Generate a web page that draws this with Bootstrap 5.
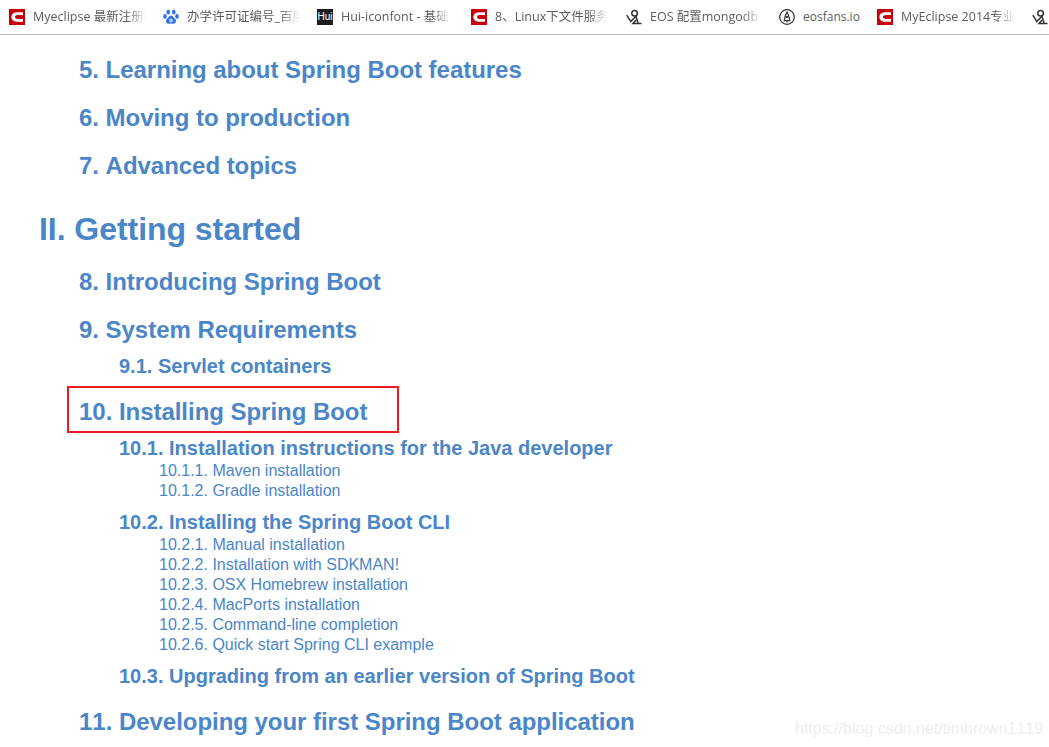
<!DOCTYPE html>
<html lang="en">
<head>
<meta charset="utf-8">
<title>Spring Boot Reference</title>
<link rel="stylesheet" href="https://cdn.jsdelivr.net/npm/bootstrap@5.3.0/dist/css/bootstrap.min.css">
<style>
html,body{height:747px;overflow:hidden;background:#fff}
body{font-family:"Liberation Sans",Arial,sans-serif;position:relative;font-kerning:none}
.bm-bar{height:35px;border-bottom:1px solid #b8b8b8;position:relative;font-family:"Open Sans","Noto Sans CJK SC",sans-serif;font-size:12.5px;color:#5c5c5c}
.bm{position:absolute;top:0;height:34px;display:flex;align-items:center;white-space:nowrap;overflow:hidden}
.bm svg,.bm .fav{flex:none;width:16px;height:16px;display:block}
.bm .lbl{margin-left:8px;overflow:hidden;flex:1;-webkit-mask-image:linear-gradient(to right,#000 82%,transparent);mask-image:linear-gradient(to right,#000 82%,transparent)}
.bm .lbl-plain{-webkit-mask-image:none;mask-image:none;font-size:12px;overflow:visible}
.fav-hui{background:#1c1c1c;color:#fff;font-size:10px;line-height:16px;text-align:center;font-family:"Liberation Sans",sans-serif}
.toc{padding:1px 0 0 0;margin:0;list-style:none}
.toc a{color:#4a86c8;text-decoration:none}
.lv0{font-size:32px;line-height:38px;font-weight:700;margin-top:30px;padding-left:39px;letter-spacing:-.05px}
.lv1{font-size:24px;line-height:28px;font-weight:700;margin-top:20px;padding-left:79px;position:relative;letter-spacing:-.035px}
.lv2{font-size:20px;line-height:24px;font-weight:700;margin-top:10px;padding-left:119px}
.lv3{font-size:16px;line-height:20px;font-weight:400;padding-left:159px;position:relative;top:1px}
.callout{position:absolute;left:67px;top:-12px;width:332px;height:47px;border:2px solid #f01a20}
.wmark{position:absolute;left:795px;top:719px;font-size:16px;line-height:20px;color:#eee;white-space:nowrap}
</style>
</head>
<body>
<div class="bm-bar">
  <div class="bm" style="left:9px;width:137px"><svg viewBox="0 0 16 16"><rect width="16" height="16" fill="#c8000a"/><path d="M14 3.2H8.6C4.8 3.2 2.4 5.2 2.4 8s2.4 4.8 6.2 4.8H14v-2.9H9C7.2 9.9 6 9.2 6 8s1.2-1.9 3-1.9h5z" fill="#fff"/></svg><span class="lbl">Myeclipse 最新注册码</span></div>
  <div class="bm" style="left:163px;width:137px"><svg viewBox="0 0 16 16" fill="#3072e8"><ellipse cx="5.2" cy="3" rx="1.8" ry="2.5"/><ellipse cx="10.8" cy="3" rx="1.8" ry="2.5"/><ellipse cx="2" cy="7.4" rx="1.8" ry="2.3"/><ellipse cx="14" cy="7.4" rx="1.8" ry="2.3"/><path d="M8 6.4c-2 0-2.5 2.4-4 3.4-1.6 1.1-1.4 5 1.6 5 1 0 1.5-.4 2.4-.4s1.5.4 2.4.4c3 0 3.2-3.9 1.6-5-1.5-1-2-3.4-4-3.4z"/><circle cx="8" cy="11.4" r="2" fill="#a9c8f6"/></svg><span class="lbl">办学许可证编号_百度</span></div>
  <div class="bm" style="left:317px;width:134px"><div class="fav fav-hui">Hui</div><span class="lbl">Hui-iconfont - 基础</span></div>
  <div class="bm" style="left:471px;width:137px"><svg viewBox="0 0 16 16"><rect width="16" height="16" fill="#c8000a"/><path d="M14 3.2H8.6C4.8 3.2 2.4 5.2 2.4 8s2.4 4.8 6.2 4.8H14v-2.9H9C7.2 9.9 6 9.2 6 8s1.2-1.9 3-1.9h5z" fill="#fff"/></svg><span class="lbl">8、Linux下文件服务器</span></div>
  <div class="bm" style="left:626px;width:136px"><svg viewBox="0 0 16 16" fill="none" stroke="#333" stroke-width="1.5"><circle cx="8.6" cy="4.2" r="2.8"/><path d="M.8 6.2l4 6.4 5.2-5.4 2.2 7.4M10 11l-3 3.4h8.5"/></svg><span class="lbl">EOS 配置mongodb -</span></div>
  <div class="bm" style="left:779px;width:85px"><svg viewBox="0 0 16 16" fill="none" stroke="#333"><circle cx="8" cy="8" r="7.3" stroke-width="1.2"/><path d="M8 3C6.8 5 5.4 8.6 5.2 11.6h5.6C10.6 8.6 9.2 5 8 3zM8 11.6V13.4" stroke-width="1.2"/><circle cx="8" cy="8" r="1.2" fill="#333" stroke="none"/></svg><span class="lbl lbl-plain">eosfans.io</span></div>
  <div class="bm" style="left:877px;width:138px"><svg viewBox="0 0 16 16"><rect width="16" height="16" fill="#c8000a"/><path d="M14 3.2H8.6C4.8 3.2 2.4 5.2 2.4 8s2.4 4.8 6.2 4.8H14v-2.9H9C7.2 9.9 6 9.2 6 8s1.2-1.9 3-1.9h5z" fill="#fff"/></svg><span class="lbl">MyEclipse 2014专业版</span></div>
  <div class="bm" style="left:1032px;width:17px"><svg viewBox="0 0 16 16" fill="none" stroke="#333" stroke-width="1.5"><circle cx="8.6" cy="4.2" r="2.8"/><path d="M.8 6.2l4 6.4 5.2-5.4 2.2 7.4M10 11l-3 3.4h8.5"/></svg></div>
</div>
<ul class="toc">
  <li class="lv1"><a href="#">5. Learning about Spring Boot features</a></li>
  <li class="lv1"><a href="#">6. Moving to production</a></li>
  <li class="lv1"><a href="#">7. Advanced topics</a></li>
  <li class="lv0"><a href="#">II. Getting started</a></li>
  <li class="lv1"><a href="#">8. Introducing Spring Boot</a></li>
  <li class="lv1"><a href="#">9. System Requirements</a></li>
  <li class="lv2"><a href="#">9.1. Servlet containers</a></li>
  <li class="lv1"><a href="#">10. Installing Spring Boot<span class="callout"></span></a></li>
  <li class="lv2"><a href="#">10.1. Installation instructions for the Java developer</a></li>
  <li class="lv3"><a href="#">10.1.1. Maven installation</a></li>
  <li class="lv3"><a href="#">10.1.2. Gradle installation</a></li>
  <li class="lv2"><a href="#">10.2. Installing the Spring Boot CLI</a></li>
  <li class="lv3"><a href="#">10.2.1. Manual installation</a></li>
  <li class="lv3"><a href="#">10.2.2. Installation with SDKMAN!</a></li>
  <li class="lv3"><a href="#">10.2.3. OSX Homebrew installation</a></li>
  <li class="lv3"><a href="#">10.2.4. MacPorts installation</a></li>
  <li class="lv3"><a href="#">10.2.5. Command-line completion</a></li>
  <li class="lv3"><a href="#">10.2.6. Quick start Spring CLI example</a></li>
  <li class="lv2"><a href="#">10.3. Upgrading from an earlier version of Spring Boot</a></li>
  <li class="lv1"><a href="#">11. Developing your first Spring Boot application</a></li>
</ul>
<div class="wmark">https://blog.csdn.net/timbrown1119</div>
<script src="https://cdn.jsdelivr.net/npm/bootstrap@5.3.0/dist/js/bootstrap.bundle.min.js"></script>
</body>
</html>
